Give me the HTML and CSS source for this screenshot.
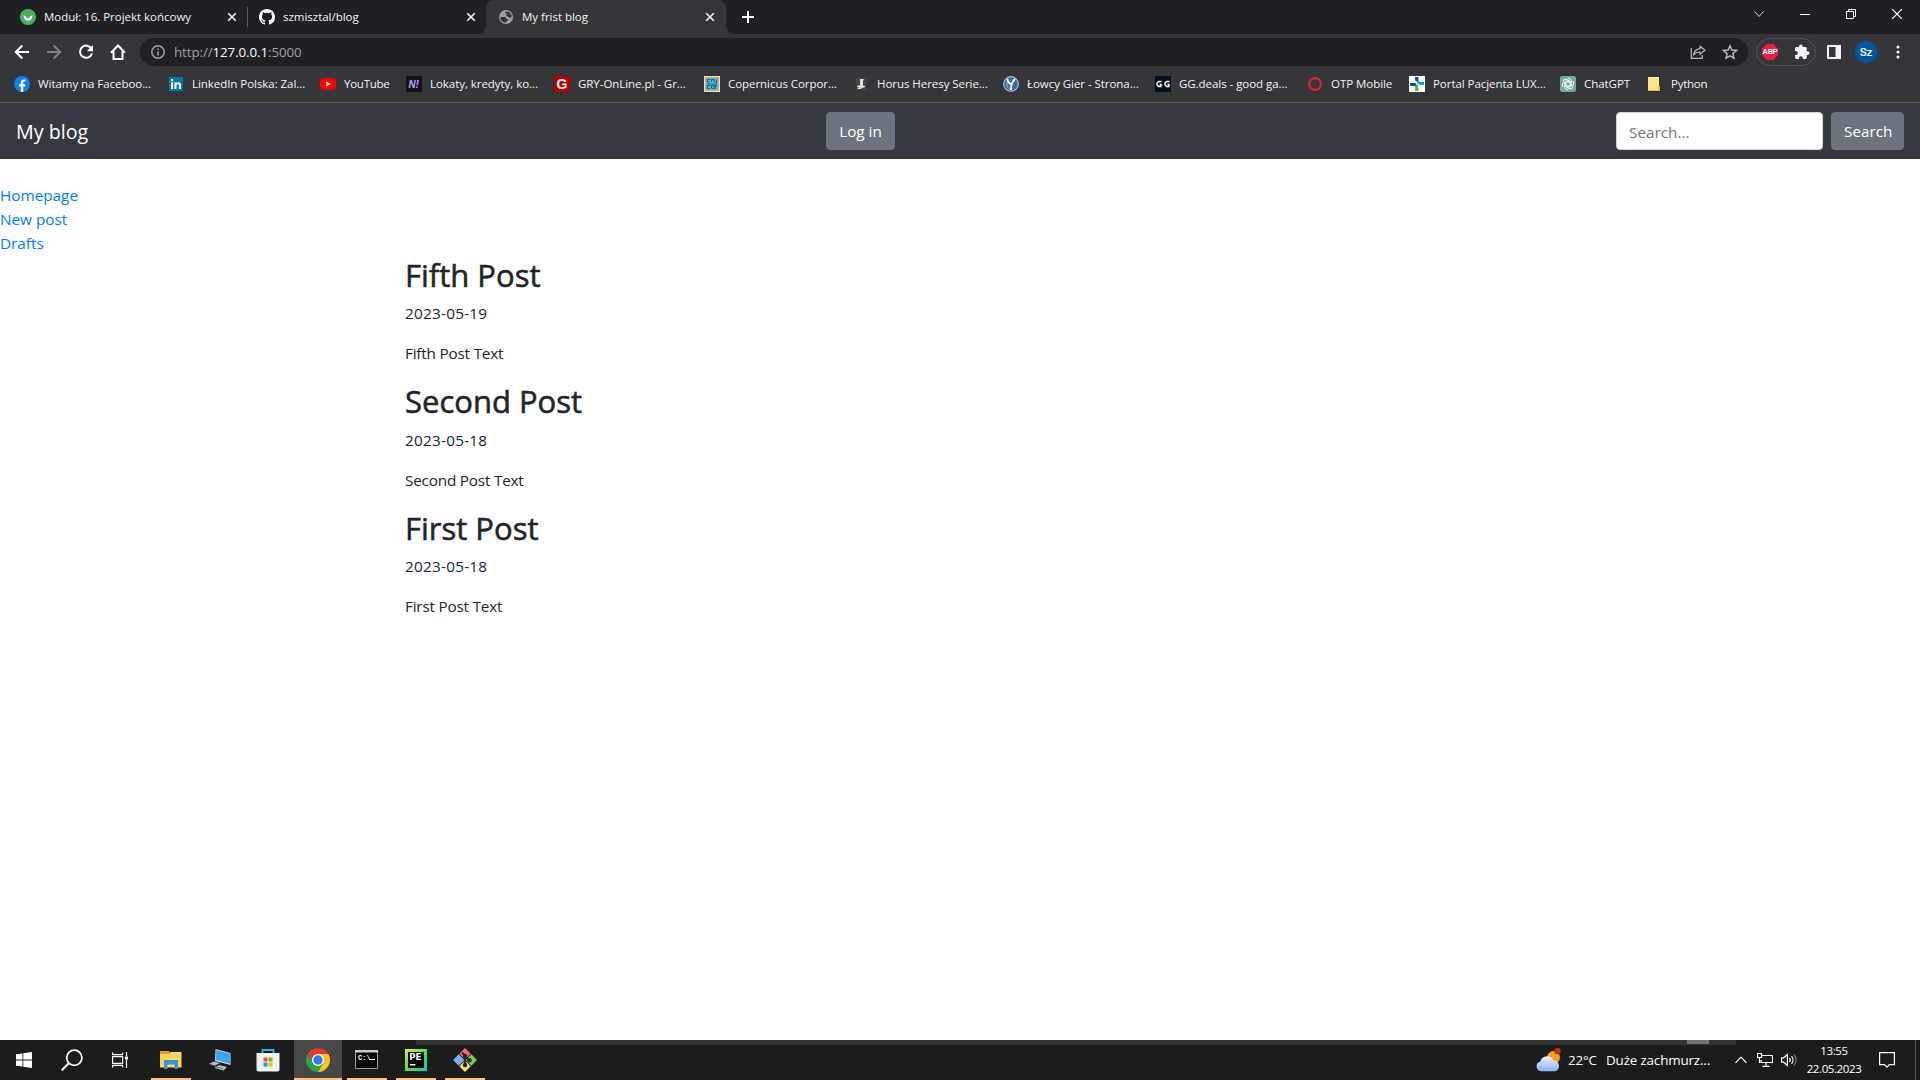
FILE: index.html
```html
<!DOCTYPE html>
<html lang="pl">
<head>
<meta charset="utf-8">
<title>My frist blog</title>
<link rel="stylesheet" href="styles.css">
</head>
<body>
<header class="browser">
  <div class="tabs">
    <div class="tab">
      <svg class="fav" viewBox="0 0 16 16"><circle cx="8" cy="8" r="8" fill="#4caf60"/><path d="M3.500 6.500c.3 3.500 2 5.300 4.500 5.300s4.200-1.800 4.500-5.300l-2 .6C9.800 8.800 9 9.300 8 9.300S6.200 8.800 5.500 7.100z" fill="#fff"/></svg>
      <span class="tab-title">Moduł: 16. Projekt końcowy</span>
      <svg class="close" viewBox="0 0 10 10"><path d="M1.200 1.200l7.600 7.600M8.800 1.200L1.200 8.800"/></svg>
    </div>
    <div class="tab tab-divided">
      <svg class="fav" viewBox="0 0 16 16"><path fill="#fff" d="M8 0C3.580 0 0 3.580 0 8c0 3.540 2.290 6.530 5.470 7.590.4.070.55-.17.55-.38 0-.19-.01-.82-.01-1.490-2.010.37-2.530-.49-2.690-.94-.09-.23-.48-.94-.82-1.130-.28-.15-.68-.52-.01-.53.63-.01 1.080.58 1.230.82.72 1.210 1.870.87 2.330.66.070-.52.28-.87.51-1.070-1.780-.2-3.640-.89-3.640-3.950 0-.87.31-1.590.82-2.150-.08-.2-.36-1.020.08-2.120 0 0 .67-.21 2.200.82.64-.18 1.320-.27 2-.27s1.360.09 2 .27c1.530-1.040 2.200-.82 2.200-.82.44 1.100.16 1.920.08 2.120.51.56.82 1.270.82 2.150 0 3.070-1.870 3.750-3.650 3.950.29.25.54.73.54 1.480 0 1.070-.01 1.930-.01 2.200 0 .21.15.46.55.38A8.010 8.010 0 0 0 16 8c0-4.420-3.580-8-8-8z"/></svg>
      <span class="tab-title">szmisztal/blog</span>
      <svg class="close" viewBox="0 0 10 10"><path d="M1.200 1.200l7.600 7.600M8.800 1.200L1.200 8.800"/></svg>
    </div>
    <div class="tab tab-active">
      <svg class="fav" viewBox="0 0 16 16"><circle cx="8" cy="8" r="7" fill="#9aa0a6"/><path fill="#35363a" d="M8.500 2.500c2 0 4 1.200 4.800 3.200.3.700.4 1.500.4 2.300-.8.900-2.500 1-3.200 0-.5-.8-1.900-.2-2.300-1.200-.3-.9.900-1.200.5-2C8.300 4 7 4.300 7.200 3.300c.1-.5.600-.8 1.300-.8zM2.300 8h4c1.500 0 2 .9 2 2h1.500c.5 0 .5 1 0 1.200-.8.300-1.300.6-1.400 1.200-.1.500-.6 1.100-1.400 1.100-2.700-.3-4.700-2.700-4.700-5.500z"/></svg>
      <span class="tab-title">My frist blog</span>
      <svg class="close" viewBox="0 0 10 10"><path d="M1.200 1.200l7.600 7.600M8.800 1.200L1.200 8.800"/></svg>
    </div>
    <svg class="new-tab" viewBox="0 0 12 12"><path d="M6 0v12M0 6h12"/></svg>
    <div class="window-controls">
      <svg viewBox="0 0 12 12"><path d="M1.500 3.500L6 8.500l4.500-5" stroke="#d0d2d4"/></svg>
      <svg viewBox="0 0 12 12"><path d="M1 6.500h10"/></svg>
      <svg viewBox="0 0 12 12"><path d="M1.500 3.500h7v7h-7zM3.500 3.500v-2h7v7h-2"/></svg>
      <svg viewBox="0 0 12 12"><path d="M1.200 1.200l9.600 9.600M10.800 1.200l-9.600 9.600" stroke-width="1.200"/></svg>
    </div>
  </div>

  <div class="toolbar">
    <svg class="nav" viewBox="0 0 16 16"><path d="M15 8H2M8.300 1.500L1.800 8l6.500 6.500"/></svg>
    <svg class="nav nav-off" viewBox="0 0 16 16"><path d="M1 8h13M7.700 1.500L14.200 8l-6.500 6.500"/></svg>
    <svg class="nav" viewBox="0 0 16 16"><path d="M13.300 4.400A6.100 6.100 0 1 0 14 9.500"/><path d="M15 1v6.200H8.800z" fill="#fff" stroke="none"/></svg>
    <svg class="nav" viewBox="0 0 16 16"><path d="M1 8.700L8 1.500l7 7.200M3.500 7v8h9V7"/></svg>
    <div class="omnibox">
      <svg class="info" viewBox="0 0 14 14"><circle cx="7" cy="7" r="6.200"/><path d="M7 6.300v4.200M7 3.400v1.700"/></svg>
      <span class="url">http://<b>127.0.0.1</b>:5000</span>
      <svg class="omni-icon" viewBox="0 0 16 16"><path d="M1.300 4v10.300h11V11M10 2.300l5 4-5 4V8C7 8 5.100 8.900 3.500 11c.5-3.500 2.700-6 6.500-6.400z"/></svg>
      <svg class="omni-icon star" viewBox="0 0 16 16"><path d="M8 1.800l1.800 4.300 4.700.4-3.600 3.100 1.100 4.600L8 11.800l-4 2.400 1.100-4.600-3.600-3.100 4.700-.4z" stroke-width="1.500"/></svg>
    </div>
    <div class="extensions">
      <span class="abp">ABP</span>
      <svg viewBox="0 0 16 16"><path fill="#f1f3f4" d="M13.700 7.300h-.9V4.500c0-.8-.6-1.400-1.400-1.400H8.700v-.9a1.800 1.800 0 0 0-3.600 0v.9H2.400C1.600 3.100 1 3.700 1 4.500v2.600h.9a1.900 1.900 0 0 1 0 3.800H1v2.700c0 .8.600 1.400 1.400 1.400H5v-.9a1.900 1.900 0 0 1 3.800 0v.9h2.600c.8 0 1.400-.6 1.400-1.400v-2.700h.9a1.800 1.800 0 0 0 0-3.600z"/></svg>
    </div>
    <svg class="panel" viewBox="0 0 14 14"><path fill="#f1f3f4" fill-rule="evenodd" d="M0 0h14v14H0zM2 2v10h6.500V2z"/></svg>
    <span class="avatar">Sz</span>
    <svg class="kebab" viewBox="0 0 4 14"><circle cx="2" cy="2" r="1.600"/><circle cx="2" cy="7" r="1.600"/><circle cx="2" cy="12" r="1.600"/></svg>
  </div>

  <nav class="bookmarks">
    <a><svg viewBox="0 0 16 16"><circle cx="8" cy="8" r="8" fill="#0a84f5"/><path fill="#fff" d="M6.900 16v-5.400H5V8.300h1.900V6.700c0-2.200 1.200-3.300 3-3.300.6 0 1.300.1 1.600.2v1.900h-1c-.9 0-1.300.5-1.300 1.200v1.600h2.200l-.4 2.300H9.200V16z"/></svg><span>Witamy na Faceboo...</span></a>
    <a><svg viewBox="0 0 16 16"><path fill="#0077b5" d="M1 1h14v14H1z"/><path fill="#fff" d="M3 6.300h2.100V13H3zM6.400 6.300h2v.9c.8-1.400 4.600-1.700 4.600 1.600V13h-2.100V9.500c0-1.900-2.400-1.700-2.400 0V13H6.400z"/><circle cx="4.050" cy="4.100" r="1.250" fill="#fff"/></svg><span>LinkedIn Polska: Zal...</span></a>
    <a class="tight"><svg viewBox="0 0 16 16"><rect y="2.300" width="16" height="11.400" rx="2.700" fill="#f00"/><path fill="#fff" d="M6.300 5.600L10.600 8l-4.300 2.400z"/></svg><span>YouTube</span></a>
    <a><svg viewBox="0 0 16 16"><path fill="#15131c" d="M0 0h16v16H0z"/><text class="glyph-n" x="7.500" y="12">N!</text></svg><span>Lokaty, kredyty, ko...</span></a>
    <a><svg viewBox="0 0 16 16"><path fill="#b80000" d="M0 0h16v16H0z"/><text class="glyph-g" x="8" y="13.200">G</text></svg><span>GRY-OnLine.pl - Gr...</span></a>
    <a><svg viewBox="0 0 16 16"><path fill="#efe4cb" d="M0 0h16v16H0z"/><path fill="#d8a35c" d="M1 1h14v14H1z"/><path fill="#58c4dc" d="M2 2h12v12H2z"/><path fill="none" stroke="#24627e" stroke-width="1.200" d="M6 3.500H3.500V6H6M7.500 6V3.500H10V6M12.500 3.500v3H11M3 8h10M6 9.500H3.500v3H6M7.500 12.500v-3H10v3H7.500M11.500 13V9.500H13"/></svg><span>Copernicus Corpor...</span></a>
    <a><svg viewBox="0 0 16 16"><path fill="#424242" d="M3 2h10v12H3z"/><path fill="#ddd" d="M7 3h4l-1 2v4.500l2 .5v1l-5 2H4l2-2H4v-1l3-1V5z"/></svg><span>Horus Heresy Serie...</span></a>
    <a><svg viewBox="0 0 16 16"><circle cx="8" cy="8" r="7.300" fill="#3d6c98" stroke="#a9bccb" stroke-width="1.200"/><path fill="none" stroke="#fff" stroke-width="1.800" d="M4.500 3c0 3 1.200 4.500 4 5M12 3C9 5.500 8 8.500 8 14"/><path fill="none" stroke="#b9d0e2" d="M5 6c-2 2-1.500 5 1.500 7"/></svg><span>Łowcy Gier - Strona...</span></a>
    <a><svg viewBox="0 0 16 16"><path fill="#04121f" d="M0 0h16v16H0z"/><path fill="none" stroke="#fff" stroke-width="1.400" d="M6.500 5.500H3.700L2 7v2l1.500 1.500H6v-2H4.500M14.500 5.500h-2.800L10 7v2l1.500 1.500H14v-2h-1.500"/><path d="M6.500 9H8" stroke="#d24ac0"/></svg><span>GG.deals - good ga...</span></a>
    <a><svg viewBox="0 0 16 16"><circle cx="8" cy="8" r="5.900" fill="none" stroke="#e51c35" stroke-width="2.200"/></svg><span>OTP Mobile</span></a>
    <a><svg viewBox="0 0 16 16"><path fill="#fff" d="M0 0h16v16H0z"/><path fill="#174a9c" d="M6 1h3.500v5L6 4.500zM1 7h5.500L8 9.500 6 10H1z"/><path fill="#009ddc" d="M9.500 4.500l1 1.500H15v3h-4L8 7z"/><path fill="#52b947" d="M6 10l3-2 .5 7H6zM10 7l5 2h-4z"/></svg><span>Portal Pacjenta LUX...</span></a>
    <a><svg viewBox="0 0 16 16"><rect width="16" height="16" rx="2" fill="#74aa9c"/><g fill="none" stroke="#fff" stroke-width=".9"><path id="petal" d="M7.800 2.400a2.800 2.800 0 0 1 3.500 2.700v3.600L8 10.500"/><use href="#petal" transform="rotate(60 8 8)"/><use href="#petal" transform="rotate(120 8 8)"/><use href="#petal" transform="rotate(180 8 8)"/><use href="#petal" transform="rotate(240 8 8)"/><use href="#petal" transform="rotate(300 8 8)"/></g></svg><span>ChatGPT</span></a>
    <a class="tight"><svg viewBox="0 0 16 16"><path fill="#ffe68f" d="M1 1h11v9.500h1V15H1z"/><path fill="#e8bd3c" d="M11 10.500h2V15h-2zM1 14h12v1H1z"/></svg><span>Python</span></a>
  </nav>
</header>

<main class="page">
  <nav class="navbar">
    <a class="brand">My blog</a>
    <button class="btn login">Log in</button>
    <form class="search">
      <input class="field" type="text" placeholder="Search...">
      <button class="btn" type="button">Search</button>
    </form>
  </nav>
  <div class="links">
    <a>Homepage</a>
    <a>New post</a>
    <a>Drafts</a>
  </div>
  <div class="container">
    <article><h2>Fifth Post</h2><p class="date">2023-05-19</p><p>Fifth Post Text</p></article>
    <article><h2>Second Post</h2><p class="date">2023-05-18</p><p>Second Post Text</p></article>
    <article><h2>First Post</h2><p class="date">2023-05-18</p><p>First Post Text</p></article>
  </div>
</main>

<footer class="taskbar">
  <div class="strip"><i class="thumb"></i></div>
  <div class="system">
    <span class="slot"><svg width="16" height="16" viewBox="0 0 16 16"><path fill="#fff" d="M0 2.300L6.500 1.400V7.500H0zM7.300 1.200L16 0v7.500H7.300zM0 8.400h6.500v6.100L0 13.700zM7.300 8.400H16V16l-8.700-1.300z"/></svg></span>
    <span class="slot"><svg width="22" height="22" viewBox="0 0 22 22"><g fill="none" stroke="#fff"><circle cx="13.300" cy="8.700" r="7.600" stroke-width="1.700"/><path d="M8 14l-7.200 7.300" stroke-width="2.200"/></g></svg></span>
    <span class="slot"><svg width="18" height="16" viewBox="0 0 18 16"><path fill="none" stroke="#fff" stroke-width="1.200" d="M1.600 4.600h10v6.800h-10zM1.600.5v2.200h10V.5M1.600 15.500v-2.200h10v2.200M15.500 0v4M15.500 8v8"/><path fill="#fff" d="M14 4.500h3v3h-3z"/></svg></span>
  </div>
  <div class="apps">
    <span class="slot running"><svg width="22" height="20" viewBox="0 0 22 20"><path fill="#e0a11b" d="M0 1h9l1 2v3H0z"/><path fill="#fcd462" d="M0 4h9l1.500-2H21.500v15.500H0z"/><path fill="#3d93d6" d="M4 10h14v9h-3.500v-4.500h-7V19H4z"/></svg></span>
    <span class="slot"><svg width="22" height="22" viewBox="0 0 22 22"><path fill="#cdd5da" d="M6.500 0l15 4v12L6 12z"/><path fill="#3aa7f5" d="M7.300 1l14 3.800v10L6.800 11z"/><path fill="#b4bfc6" d="M5 12.500l6 1.600-5.500 2.700-5.500-2zM10 16l8 2-3.500 3.500-9-2.500z"/><path d="M6 17.500l8 2.200" stroke="#68747d"/></svg></span>
    <span class="slot store"><svg width="24" height="24" viewBox="0 0 24 24"><path fill="none" stroke="#2baee8" stroke-width="2" d="M6.500 6V2h11v4"/><path fill="#f1f1f1" d="M.5 5h23v16a2.500 2.500 0 0 1-2.500 2.500H3A2.500 2.500 0 0 1 .5 21z"/><path fill="#f25022" d="M7.500 9.500h4v4h-4z"/><path fill="#7fba00" d="M12.500 9.500h4v4h-4z"/><path fill="#00a4ef" d="M7.500 14.500h4v4h-4z"/><path fill="#ffb900" d="M12.500 14.500h4v4h-4z"/></svg></span>
    <span class="slot running active"><svg width="24" height="24" viewBox="0 0 24 24"><path fill="#e33b2e" d="M1.610 6A12 12 0 0 1 22.390 6H12v6L6.800 15z"/><path fill="#fcc31e" d="M22.390 6A12 12 0 0 1 12 24L17.200 15 12 6z"/><path fill="#2ba24c" d="M12 24A12 12 0 0 1 1.610 6L6.800 15 12 18l5.200-3z"/><circle cx="12" cy="12" r="6" fill="#fff"/><circle cx="12" cy="12" r="4.700" fill="#2f7ceb"/></svg></span>
    <span class="slot running"><svg width="24" height="20" viewBox="0 0 24 20"><path fill="#050505" stroke="#999" d="M.5.500h22v18H.5z"/><path fill="#c9ced2" d="M0 0h23v2.500H0z"/><text class="cmd" x="3" y="9.500">C:\</text><path fill="#fff" d="M14 9h6v1h-6z"/></svg></span>
    <span class="slot running"><svg width="22" height="22" viewBox="0 0 22 22"><defs><linearGradient id="pe" x2="1" y2="1"><stop stop-color="#e9f13d"/><stop offset=".4" stop-color="#62e537"/><stop offset="1" stop-color="#10c6b4"/></linearGradient></defs><path fill="url(#pe)" d="M0 0h22v22H0z"/><path d="M3 3h16v16H3z"/><text class="pe" x="4.300" y="11">PE</text><path fill="#fff" d="M5 15h5.500v1.500H5z"/></svg></span>
    <span class="slot running"><svg width="24" height="24" viewBox="0 0 24 24"><path fill="#ed6b72" d="M12 0l5.700 5.700L12 11.400 6.300 5.700z"/><path fill="#7baef7" d="M5.700 6.300l5.700 5.700-5.700 5.700L0 12z"/><path fill="#83cc5b" d="M18.300 6.300L24 12l-5.700 5.700-5.700-5.700z"/><path fill="#fbdc70" d="M12 12.600l5.700 5.700L12 24l-5.700-5.700z"/><path fill="none" stroke="#2b2420" stroke-width="1.800" d="M9 4.500l3 3V18M12 8l4.500 4.500"/><g fill="#2b2420"><circle cx="12" cy="8" r="2.200"/><circle cx="12" cy="17" r="2.200"/><circle cx="16.500" cy="12.300" r="2.200"/></g></svg></span>
  </div>
  <div class="tray">
    <svg class="weather" width="25" height="24" viewBox="0 0 25 24"><defs><linearGradient id="cl" x2="0" y2="1"><stop stop-color="#e6effc"/><stop offset="1" stop-color="#8db4ee"/></linearGradient></defs><circle cx="17.500" cy="9.500" r="6.500" fill="#f7a11b"/><circle cx="21.500" cy="3" r="3.200" fill="#c42b1c"/><path fill="url(#cl)" d="M5 23.200a5 5 0 0 1-.7-9.800 7 7 0 0 1 13.200-.8 5.500 5.500 0 0 1 2 10.600z"/></svg>
    <span class="temp">22°C</span>
    <span class="forecast">Duże zachmurz...</span>
    <svg class="chev" width="12" height="8" viewBox="0 0 12 8"><path d="M.5 6.800L6 1.200l5.500 5.600"/></svg>
    <svg class="net" width="16" height="14" viewBox="0 0 16 14"><path d="M5 2.500h10.500v7H4V7M9 9.500v4M5.500 13.300h7M.5.500h4v4h-4zM2.500 4.500V10"/></svg>
    <svg class="sound" width="16" height="14" viewBox="0 0 16 14"><path d="M.6 4.800h2L6.400 1.500v11L2.600 9.200h-2zM8.500 5c1 1.200 1 2.800 0 4M10.500 3.200c2 2.200 2 5.400 0 7.600"/><path d="M12.800 1.500c3 3 3 8 0 11" stroke="#777"/></svg>
    <div class="clock"><span>13:55</span><span class="day">22.05.2023</span></div>
    <svg class="notice" width="16" height="17" viewBox="0 0 16 17"><path d="M.6.600h14.800v12h-5L8 15.200l-2.400-2.600h-5z"/></svg>
    <i class="peek"></i>
  </div>
</footer>
</body>
</html>
```
FILE: styles.css
```css
* { box-sizing: border-box; }
body {
  margin: 0;
  height: 1080px;
  display: flex;
  flex-direction: column;
  overflow: hidden;
  background: #fff;
  color: #212529;
  font-family: "Open Sans", "Noto Sans", sans-serif;
  font-size: 15.300px;
  line-height: 24px;
}
svg { flex: none; }

/* Browser frame */
.browser { height: 103px; flex: none; background: #35363a; border-bottom: 1px solid #5f6164; color: #f1f3f4; font-size: 11.500px; }
.tabs { height: 34px; display: flex; align-items: center; padding-left: 8px; background: #202124; }
.tab { width: 239px; height: 34px; display: flex; align-items: center; padding: 0 10px 0 12px; }
.tab-divided { background: linear-gradient(#5a5c60, #5a5c60) 0 7px / 1px 20px no-repeat; }
.tab-active { width: 240px; padding-right: 11px; position: relative; background: #35363a; border-radius: 8px 8px 0 0; }
.tab-active::before, .tab-active::after { content: ""; position: absolute; bottom: 0; width: 8px; height: 8px; }
.tab-active::before { left: -8px; background: radial-gradient(circle at 0 0, transparent 7.500px, #35363a 8px); }
.tab-active::after { right: -8px; background: radial-gradient(circle at 100% 0, transparent 7.500px, #35363a 8px); }
.fav { width: 16px; height: 16px; }
.tab-title { flex: 1; margin-left: 8px; white-space: nowrap; letter-spacing: -0.020px; }
.close { width: 10px; height: 10px; fill: none; stroke: #f1f3f4; stroke-width: 1.600; }
.new-tab { width: 12px; height: 12px; margin-left: 16px; fill: none; stroke: #fff; stroke-width: 2; }
.window-controls { display: flex; gap: 34px; margin: 0 17px 6px auto; }
.window-controls svg { width: 12px; height: 12px; fill: none; stroke: #fff; }

.toolbar { height: 36px; display: flex; align-items: center; padding: 0 20px 0 14px; }
.nav { width: 16px; height: 16px; margin-right: 16px; fill: none; stroke: #fff; stroke-width: 2; }
.nav-off { stroke: #808184; }
.omnibox { width: 1608px; height: 28px; display: flex; align-items: center; margin-left: -2px; padding: 0 10px 0 11px; border-radius: 14px; background: #202124; }
.info { width: 14px; height: 14px; fill: none; stroke: #9aa0a6; stroke-width: 1.500; }
.url { flex: 1; margin-left: 9px; color: #9aa0a6; font-size: 13.300px; letter-spacing: -0.070px; }
.url b { color: #fff; font-weight: 400; }
.omni-icon { width: 16px; height: 16px; fill: none; stroke: #b4b7ba; stroke-width: 1.200; }
.star { margin-left: 16px; }
.extensions { width: 60px; height: 28px; display: flex; align-items: center; justify-content: space-between; margin-left: 8px; padding: 0 5px; border: 1px solid #505154; border-radius: 14px; }
.extensions svg { width: 16px; height: 16px; }
.abp {
  width: 16px;
  height: 16px;
  background: #ed1e45;
  clip-path: polygon(30% 0, 70% 0, 100% 30%, 100% 70%, 70% 100%, 30% 100%, 0 70%, 0 30%);
  color: #fff;
  font: 700 7.500px/16px "Liberation Sans", sans-serif;
  letter-spacing: -0.300px;
  text-align: center;
}
.panel { width: 14px; height: 14px; margin-left: 11px; }
.avatar { width: 22px; height: 22px; margin-left: 14px; border-radius: 50%; background: #01579b; color: #fff; font: 500 11.500px/22px Roboto, sans-serif; text-align: center; }
.kebab { width: 4px; height: 14px; margin-left: 19px; fill: #f1f3f4; }

.bookmarks { height: 28px; display: grid; align-items: center; padding-left: 14px; grid-template-columns: 154px 152px 86px 148px 150px 149px 150px 152px 152px 102px 151px 87px 80px; }
.bookmarks a { display: flex; align-items: center; gap: 8px; white-space: nowrap; letter-spacing: -0.050px; }
.bookmarks .tight { letter-spacing: -0.250px; }
.bookmarks svg { width: 16px; height: 16px; }
.glyph-n { font: italic 700 10px "Open Sans", sans-serif; fill: #b79af0; text-anchor: middle; }
.glyph-g { font: 700 14px "Liberation Sans", sans-serif; fill: #fff; text-anchor: middle; }

/* Blog */
.page { flex: 1; }
.navbar { height: 56px; display: flex; align-items: center; justify-content: space-between; padding: 0 16px; background: #343a40; }
.brand { width: 73px; margin-right: 16px; padding-top: 2px; color: #fff; font-size: 19.700px; line-height: 30px; white-space: nowrap; }
.btn { height: 38px; padding: 0 12px; border: 1px solid #6c757d; border-radius: 4px; background: #6c757d; color: #fff; font: inherit; white-space: nowrap; }
.login { width: 69px; }
.search { display: flex; gap: 8px; margin: 0; }
.search .btn { width: 73px; }
.field { width: 207px; height: 38px; padding: 2px 12px 0; border: 1px solid #ced4da; border-radius: 4px; font: inherit; }
.field::placeholder { color: #6c757d; opacity: 1; }
.links { display: flex; flex-direction: column; margin-top: 24px; color: #007bff; }
.container { width: 1140px; margin: 0 auto; padding: 0 15px; }
h2 { margin: 0 0 7px; padding-top: 1px; font-size: 31px; line-height: 38.400px; font-weight: 500; -webkit-text-stroke: 0.550px #212529; }
p { margin: 0 0 16px; letter-spacing: -0.200px; }
.date { letter-spacing: 0.250px; }

/* Taskbar */
.taskbar { position: relative; height: 40px; flex: none; display: flex; background: #1c1c1c; color: #fff; }
.strip { position: absolute; left: 416px; top: 0; width: 1320px; height: 5px; background: #333435; }
.thumb { position: absolute; left: 1271px; top: 0; width: 22px; height: 4px; background: #747474; }
.system, .apps { display: flex; }
.apps { gap: 1px; margin-left: 3px; }
.slot { width: 48px; height: 40px; display: flex; align-items: center; justify-content: center; }
.store { padding-right: 2px; }
.running { background: linear-gradient(#ffc083, #ffc083) 4px 38px / 40px 2px no-repeat; }
.active { background: linear-gradient(#ffc083, #ffc083) 0 38px / 48px 2px no-repeat #484848; }
.cmd { font: 700 7px "Liberation Mono", monospace; fill: #fff; }
.pe { font: 700 8.500px "DejaVu Sans", sans-serif; fill: #fff; }
.tray { display: flex; align-items: center; margin-left: auto; font-size: 13.400px; white-space: nowrap; }
.tray svg { fill: none; stroke: #fff; stroke-width: 1.200; }
.tray .weather { stroke: none; }
.temp { width: 31px; margin-left: 7px; letter-spacing: -0.200px; }
.forecast { width: 104px; margin-left: 7px; letter-spacing: -0.150px; }
.tray .chev { margin-left: 25px; }
.tray .net { margin-left: 10px; }
.tray .sound { margin-left: 8px; }
.clock { width: 56px; display: flex; flex-direction: column; align-items: center; margin-left: 9px; font-size: 11.500px; line-height: 18px; letter-spacing: -0.400px; }
.tray .notice { margin-left: 17px; }
.peek { width: 5px; height: 40px; margin-left: 20px; border-left: 1px solid #555; }
```
